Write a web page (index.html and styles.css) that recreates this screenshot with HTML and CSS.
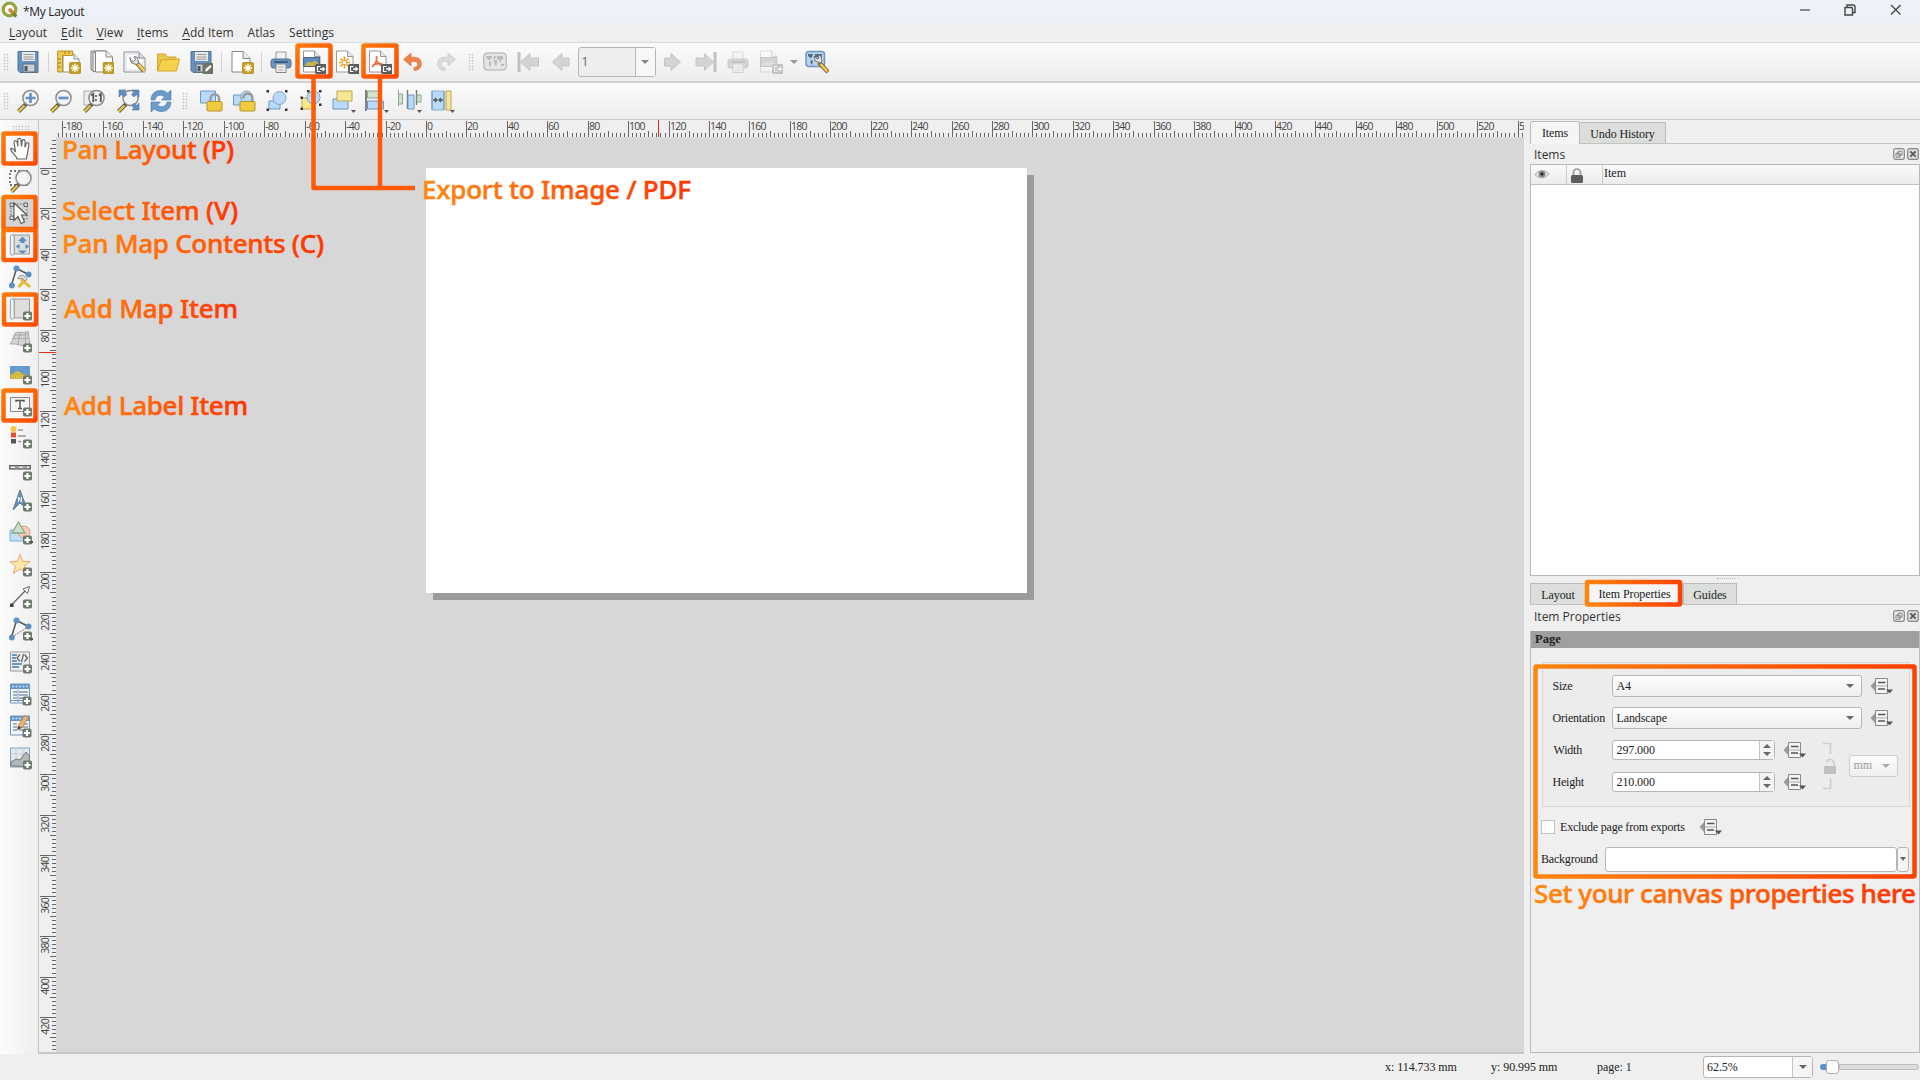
FILE: index.html
```html
<!DOCTYPE html>
<html lang="en">
<head>
<meta charset="utf-8">
<title>*My Layout</title>
<link rel="stylesheet" href="styles.css">
</head>
<body>
<svg class="sprite" aria-hidden="true">
  <defs>
    <symbol id="plus" viewBox="0 0 10 10"><rect x=".5" y=".5" width="9" height="9" rx="1.8" fill="#6b7a6b"/><path d="M5 2v6M2 5h6" stroke="#fff" stroke-width="2.2"/></symbol>
    <symbol id="star-badge" viewBox="0 0 11 11"><rect width="11" height="11" rx="1.5" fill="#c09a28"/><path d="M5.5 1.5v8M1.5 5.5h8M2.8 2.8l5.4 5.4M8.2 2.8L2.8 8.2" stroke="#fffbe0" stroke-width="1.3"/></symbol>
    <symbol id="export-badge" viewBox="0 0 12 10"><rect width="12" height="10" rx="1.8" fill="#5c5c5c"/><path d="M5.500 2.500H2.500v5h3" fill="none" stroke="#fff" stroke-width="1.200"/><path d="M5 4.300h2.500V2.300L10.500 5 7.500 7.700V5.700H5z" fill="#fff"/></symbol>
    <symbol id="lens" viewBox="0 0 24 24"><path d="M10 15l-7.500 7.500" stroke="#57574f" stroke-width="4"/><path d="M8.500 16.500L2.500 22.500" stroke="#f0c640" stroke-width="2.400"/><circle cx="14.500" cy="9" r="7.600" fill="#f4f4f4" fill-opacity=".9" stroke="#8e8e8e" stroke-width="1.500"/></symbol>
    <symbol id="save" viewBox="0 0 24 24"><path d="M2 1.500h20v21H4L2 20.500z" fill="#6491c2" stroke="#57748f"/><path d="M6 2h13v9H6z" fill="#e9e9e9"/><path d="M7.500 4.500h10M7.500 7h10M7.500 9.200h10" stroke="#999"/><path d="M7 14h12v8H7z" fill="#ccd0d2" stroke="#667"/><path d="M8.500 16h3v5h-3z" fill="#3d5a78"/></symbol>
    <symbol id="new-layout" viewBox="0 0 24 24"><path d="M6 4h11l5 5v13H6z" fill="#fff" stroke="#8d8d8d"/><path d="M17 4v5h5" fill="#eee" stroke="#8d8d8d"/><path d="M.700 1h15v4.500H5.500V22H.700z" fill="#f2cb4a" stroke="#b8922b"/><path d="M1 9h3M1 13h3M1 17h3M8 1v3M12 1v3" stroke="#9d7b22"/><use href="#star-badge" x="12" y="12" width="12" height="12"/></symbol>
    <symbol id="duplicate" viewBox="0 0 24 24"><path d="M1 1h15v19H1z" fill="#ddd" stroke="#858585"/><path d="M3 2.500h15v19H3z" fill="#eee" stroke="#858585"/><path d="M5.500 1h11l6 6v15h-17z" fill="#fff" stroke="#858585"/><path d="M16 1v6h6" fill="#eee" stroke="#858585"/><use href="#star-badge" x="12.500" y="12" width="12" height="12"/></symbol>
    <symbol id="manager" viewBox="0 0 24 24"><path d="M1 2h15l6 6v14H1z" fill="#fff" stroke="#8d8d8d"/><path d="M3 4h12v4h5v12H3z" fill="none" stroke="#c9d9ec"/><path d="M16 2v6h6" fill="#ddd" stroke="#8d8d8d"/><path d="M13 12l8 9" stroke="#806c34" stroke-width="4.500"/><path d="M15 14l6.500 7" stroke="#f3ce57" stroke-width="2.600"/><path d="M7 7.500l1.500 5.500 5 1.500 2-2-1-5-3-1 1 3-2 2-3-1z" fill="#e2e2e2" stroke="#777"/></symbol>
    <symbol id="folder" viewBox="0 0 24 24"><path d="M1.500 21V4h8l1.500 3h9v3" fill="#ebc74a" stroke="#cda22d"/><path d="M1.500 21L5 10l18.500-1-3 12z" fill="#f6d24b" stroke="#d3a62c"/></symbol>
    <symbol id="save-as" viewBox="0 0 24 24"><use href="#save" width="24" height="24"/><rect x="13.500" y="13" width="11" height="11" rx="1.500" fill="#6d7465"/><path d="M16 21.500l1-3 4.500-3.500 1 1.500-4 4.500z" fill="#fff"/></symbol>
    <symbol id="add-page" viewBox="0 0 24 24"><path d="M2 1.500h11l7 7v13.500H2z" fill="#fff" stroke="#858585"/><path d="M13 1.500v7h7" fill="#eee" stroke="#858585"/><use href="#star-badge" x="12" y="12" width="12" height="12"/></symbol>
    <symbol id="print" viewBox="0 0 24 24"><path d="M7 2h10v8H7z" fill="#f2f2f2" stroke="#999"/><rect x="2" y="9" width="20" height="9" rx="2.500" fill="#6795c5" stroke="#536f8d"/><path d="M5 12h14" stroke="#405f7d" stroke-width="2"/><path d="M7 14h10v8.500H7z" fill="#eee" stroke="#888"/><path d="M9 17h6M9 20h5" stroke="#aaa"/></symbol>
    <symbol id="doc" viewBox="0 0 24 24"><path d="M1.500 1h11l5.500 5.500V22H1.500z" fill="#fff" stroke="#999"/><path d="M12.500 1v5.500H18" fill="#e5e5e5" stroke="#999"/></symbol>
    <symbol id="export-image" viewBox="0 0 24 24"><use href="#doc" width="24" height="24"/><path d="M1.500 7.500h16v9h-16z" fill="#5c8dc0" stroke="#4c6578"/><path d="M3 15l3-3.500 3 1 4-2 4 3.500v2H3z" fill="#c9b350"/><use href="#export-badge" x="13" y="14" width="12" height="10"/></symbol>
    <symbol id="export-svg" viewBox="0 0 24 24"><use href="#doc" width="24" height="24"/><path d="M9.500 6.500v12M4 12.500h11M5.500 8.500l8 8M13.500 8.500l-8 8" stroke="#f39a21" stroke-width="1.600"/><circle cx="9.500" cy="12.500" r="1.700" fill="#fff"/><use href="#export-badge" x="13" y="14" width="12" height="10"/></symbol>
    <symbol id="export-pdf" viewBox="0 0 24 24"><use href="#doc" width="24" height="24"/><path d="M8.500 6c1 5-1 8-4.500 11M9 11c1 3 3 4.500 7 5M5 15c4-2 7-2 9-1" fill="none" stroke="#ef6a36" stroke-width="1.700"/><use href="#export-badge" x="13" y="14" width="12" height="10"/></symbol>
    <symbol id="undo" viewBox="0 0 24 24"><path d="M2.500 9.500L10 3v4.200h3.500c5 0 6.800 3.300 6.800 6.300 0 4.500-3 7-7.300 7v-3c2.500 0 3.700-1.500 3.700-3.200s-1.200-2.800-3.200-2.800H10V16z" fill="#f08148" stroke="#d86d3a" stroke-width=".6"/></symbol>
    <symbol id="redo" viewBox="0 0 24 24"><path d="M21.500 9.500L14 3v4.200h-3.500c-5 0-6.800 3.300-6.800 6.300 0 4.500 3 7 7.300 7v-3c-2.500 0-3.700-1.500-3.700-3.200s1.200-2.800 3.200-2.800H14V16z" fill="#dadcda" stroke="#c6c8c6" stroke-width=".7"/></symbol>
    <symbol id="atlas" viewBox="0 0 24 24"><rect x=".7" y="3" width="22.600" height="17" rx="4" fill="#e4e6e4" stroke="#bfc1bf" stroke-width="1.600"/><path d="M3 6h6v2l-2 1.500-1 1-2-1.500zM6 11l2.500 1-1 4.500-1.500-1zM11 6h2l-1 3h-1.500zM11 10h3v3l-1 3-2-3zM14 6h6v3l-2 1v3l-2-3-2-1zM18 14h3v2h-3z" fill="#b9bcb9"/></symbol>
    <symbol id="first" viewBox="0 0 24 24"><path d="M3 2v20" stroke="#c1c3c1" stroke-width="3"/><path d="M4.500 12L14 3.500V8h8.500v8H14v4.500z" fill="#d3d5d3" stroke="#c3c5c3"/></symbol>
    <symbol id="prev" viewBox="0 0 24 24"><path d="M3.500 12L13 3.500V8h7v8h-7v4.500z" fill="#d3d5d3" stroke="#c3c5c3"/></symbol>
    <symbol id="next" viewBox="0 0 24 24"><path d="M20.500 12L11 3.500V8H4.500v8H11v4.500z" fill="#d3d5d3" stroke="#c3c5c3"/></symbol>
    <symbol id="last" viewBox="0 0 24 24"><path d="M22 2v20" stroke="#c1c3c1" stroke-width="3"/><path d="M20.500 12L11.500 3.500V8H3v8h8.500v4.500z" fill="#d3d5d3" stroke="#c3c5c3"/></symbol>
    <symbol id="atlas-settings" viewBox="0 0 24 24"><rect x="1" y="1.500" width="18.500" height="15" rx="3" fill="#b5d4f0" stroke="#7097bd" stroke-width="1.500"/><path d="M3 4h5l-1 2.500-1 2-3-2.500zM6 10l2 1-1 4-1.500-2zM10 4h7v3l-2 2-2-2-3 1z" fill="#52697c"/><path d="M14 12.500l9 9.500" stroke="#776235" stroke-width="4.300"/><path d="M15.500 14l6.800 7.300" stroke="#f3ce57" stroke-width="2.500"/><path d="M9 6l1 5 5 2 2-2-1-5-3-1 1 3-2 1z" fill="#e2e2e2" stroke="#777"/></symbol>
    <symbol id="zoom-in" viewBox="0 0 24 24"><use href="#lens" width="24" height="24"/><path d="M14.500 4v10M9.500 9h10" stroke="#6393c4" stroke-width="2.700"/></symbol>
    <symbol id="zoom-out" viewBox="0 0 24 24"><use href="#lens" width="24" height="24"/><path d="M9.500 9h10" stroke="#6393c4" stroke-width="2.700"/></symbol>
    <symbol id="zoom-actual" viewBox="0 0 24 24"><path d="M2 2h12v14H2z" fill="#eee" stroke="#aaa"/><use href="#lens" width="24" height="24"/><path d="M9.300 6.500l2-1.500v8M16.800 6.500l2-1.500v8" fill="none" stroke="#555" stroke-width="1.800"/><path d="M14 6v2M14 10v2" stroke="#555" stroke-width="1.600"/></symbol>
    <symbol id="zoom-full" viewBox="0 0 24 24"><use href="#lens" width="24" height="24"/><path d="M3 1h7L8.500 3 11 5.500 8 8 5.500 5.500 3 8zM23 1h-7l2 2-2.500 2.500L18 8l2.500-2.500L23 8zM23 21h-7l2-2-2.500-2.500L18 14l2.500 2.500L23 14z" fill="#638fbe" stroke="#4f789f" stroke-width=".6"/></symbol>
    <symbol id="refresh" viewBox="0 0 24 24"><path d="M2 11C2 1 13-1 18.500 4L22 1v10h-9.500l3-3C12 5 7 6 6 11z" fill="#6d9bc9" stroke="#527fac" stroke-width=".6"/><path d="M22 13c0 10-11 12-16.500 7L2 23V13h9.500l-3 3c3.500 3 8.500 2 9.500-3z" fill="#6d9bc9" stroke="#527fac" stroke-width=".6"/></symbol>
    <symbol id="lock" viewBox="0 0 24 24"><path d="M1.500 2h15v12h-15z" fill="#b9dafa" stroke="#6e98c0"/><path d="M11.500 14V9.500a4 4 0 0 1 8.500 0V14" fill="none" stroke="#999" stroke-width="2.400"/><rect x="8" y="12.500" width="15" height="9.500" rx="1" fill="#f0cb3d" stroke="#b79528"/></symbol>
    <symbol id="unlock" viewBox="0 0 24 24"><path d="M1.500 6h13v10h-13z" fill="#b9dafa" stroke="#6e98c0"/><circle cx="14.500" cy="8" r="6" fill="#b9dafa" stroke="#81a5c8"/><path d="M11 9.500c1-7 9-6 9.500 0V14" fill="none" stroke="#999" stroke-width="2.400"/><rect x="8" y="12.500" width="15" height="9.500" rx="1" fill="#f0cb3d" stroke="#b79528"/></symbol>
    <symbol id="group" viewBox="0 0 24 24"><path d="M4 12h11v8H4z" fill="#b9dafa" stroke="#6e98c0"/><circle cx="14.500" cy="9" r="6.500" fill="#b9dafa" stroke="#81a5c8"/><path d="M1.500 1h2.500v2.500H1.500zM20 1h2.500v2.500H20zM1.500 19.500h2.500V22H1.500zM20 19.500h2.500V22H20z" fill="#333"/></symbol>
    <symbol id="ungroup" viewBox="0 0 24 24"><path d="M3 9h13v11H3z" fill="#f8e889" stroke="#c1a94a"/><circle cx="14.500" cy="8.500" r="6.500" fill="#b9dafa" stroke="#81a5c8"/><path d="M8 1h2.500v2.500H8zM20 1h2.500v2.500H20zM1.500 7.500H4V10H1.500zM1.500 18.500h2.500V21H1.500zM14 18.500h2.500V21H14zM20 14.500h2.500V17H20z" fill="#333"/></symbol>
    <symbol id="tri" viewBox="0 0 6 4"><path d="M0 0h6L3 3.500z" fill="#555"/></symbol>
    <symbol id="raise" viewBox="0 0 24 24"><path d="M1 10h15v10H1z" fill="#b9dafa" stroke="#6e98c0"/><path d="M5 2h15v10H5z" fill="#f7e795" stroke="#b8a657"/><use href="#tri" x="19" y="21" width="5" height="3.500"/></symbol>
    <symbol id="align" viewBox="0 0 24 24"><path d="M1 1v21" stroke="#666" stroke-width="1.600"/><path d="M2.500 2h11v7h-11z" fill="#cfe3cf" stroke="#8aa88a"/><path d="M2.500 12h16v8h-16z" fill="#b9dafa" stroke="#6e98c0"/><use href="#tri" x="19" y="21" width="5" height="3.500"/></symbol>
    <symbol id="distribute" viewBox="0 0 24 24"><path d="M0 1v16M9.500 1v19M18.500 1v15" stroke="#777" stroke-width="1.400"/><path d="M.500 5h4v10h-4zM19 6h4v7h-4z" fill="#cfe3cf" stroke="#8aa88a"/><path d="M10 6h6v14h-6z" fill="#b9dafa" stroke="#6e98c0"/><use href="#tri" x="19" y="21" width="5" height="3.500"/></symbol>
    <symbol id="resize" viewBox="0 0 24 24"><path d="M1 2h12v19H1z" fill="#b9dafa" stroke="#8bb0d3"/><path d="M1 2v19M13 2v19" stroke="#6e98c0"/><path d="M2 11h3M12 11H9M4 9l2 2-2 2M10 9l-2 2 2 2" fill="none" stroke="#555" stroke-width="1.300"/><path d="M15 2h5v19h-5z" fill="#f7e795" stroke="#b8a657"/><use href="#tri" x="19" y="21" width="5" height="3.500"/></symbol>
    <symbol id="hand" viewBox="0 0 24 24"><path d="M8 22c-.500-4-5.500-6-6.500-10 2-1.500 3.500.5 5 3L5 5c1-2 2.800-1.500 3.200.5l.8 4L8.700 2.500c1-1.800 3-1.300 3.200.5l.6 6.500.7-6c.8-1.500 2.800-1 2.900.8l-.1 6 1.500-4c1-1.200 2.500-.5 2.400 1l-1.400 9c-.3 2-1 3.500-1 5.700z" fill="#fff" stroke="#666" stroke-width="1.200"/></symbol>
    <symbol id="zoom-tool" viewBox="0 0 24 24"><path d="M1 2h18v14H1z" fill="none" stroke="#444" stroke-dasharray="2 2" stroke-width="1.300"/><use href="#lens" width="24" height="24"/></symbol>
    <symbol id="select" viewBox="0 0 24 24"><path d="M2 3h16v15H2z" fill="none" stroke="#666" stroke-dasharray="1.500 1.500"/><path d="M1 2h3.500v3.500H1zM15 2h3.500v3.500H15zM1 15h3.500v3.500H1z" fill="#d8d8d8" stroke="#666"/><path d="M5 2l13 12h-5.500l3 7-3.500 1.500-3-7-4 4z" fill="#fff" stroke="#555" stroke-width="1.100"/></symbol>
    <symbol id="paper" viewBox="0 0 24 24"><path d="M5 2h15.500v19H5z" fill="#dedede" stroke="#999"/><path d="M5 2C2.500 1 1.300 2 1.300 4v16c0 3 3.700 3 4 0z" fill="#f3f3f3" stroke="#999"/></symbol>
    <symbol id="move-content" viewBox="0 0 24 24"><use href="#paper" width="24" height="24"/><path d="M13.500 3.500l4.500 4.500h-2.500v2h-4V8H9zM10.500 11v5L6.500 13.500zM16.500 11v5l4-2.500zM9 17.500h9L13.500 21z" fill="#5f8fc0"/></symbol>
    <symbol id="nodes" viewBox="0 0 24 24"><path d="M7.500 3.500L2.500 20M7.500 3.500l12 6" stroke="#555" stroke-width="1.500" fill="none"/><circle cx="7.500" cy="3.500" r="3" fill="#5e90c5"/><circle cx="19.500" cy="9.500" r="3" fill="#5e90c5"/><circle cx="2.800" cy="20.500" r="3" fill="#5e90c5"/></symbol>
    <symbol id="edit-nodes" viewBox="0 0 24 24"><use href="#nodes" width="24" height="24"/><path d="M12 14l9 8M17 14L9.500 22" stroke="#eab934" stroke-width="3"/><path d="M9 14c0-4 5-5 7-2l2 2-2 2-3-3z" fill="#ddd" stroke="#999"/></symbol>
    <symbol id="add-map" viewBox="0 0 24 24"><use href="#paper" width="24" height="24"/><use href="#plus" x="13.500" y="14" width="10" height="10"/></symbol>
    <symbol id="add-3d" viewBox="0 0 24 24"><path d="M6 4c5-2 9 1 13-2l2 14c-6 3-12-2-20-1 3-3 3-7 5-11z" fill="#d5d5d5" stroke="#aaa"/><path d="M3 10c7-2 10 1 17-1M11 3L9 16M16 3l1 14M5 7c5-2 9 0 14-2" stroke="#aaa" fill="none"/><use href="#plus" x="13.500" y="14" width="10" height="10"/></symbol>
    <symbol id="add-picture" viewBox="0 0 24 24"><path d="M1 5h20v13H1z" fill="#669ace"/><path d="M1 14c3-1 5-4 8-4l5 3 7 2v3H1z" fill="#cbb23c"/><path d="M3 15h14M6 12h6M5 17h9" stroke="#f2df71" stroke-dasharray="1 1"/><use href="#plus" x="13.500" y="14" width="10" height="10"/></symbol>
    <symbol id="add-label" viewBox="0 0 24 24"><path d="M1.500 4.500h19v14h-19z" fill="#f5f5f5" stroke="#888"/><path d="M7 9V7.500h8V9M11 7.500V15M9 15.500h4" stroke="#555" fill="none" stroke-width="1.400"/><use href="#plus" x="13.500" y="14" width="10" height="10"/></symbol>
    <symbol id="add-legend" viewBox="0 0 24 24"><circle cx="4.500" cy="4" r="3" fill="#f5c735"/><rect x="2" y="7.500" width="5" height="5" fill="#ee512f"/><rect x="2" y="14" width="5" height="4.500" fill="#555"/><path d="M9 5h5M9 11h8M9 16.500h3" stroke="#999" stroke-width="1.400"/><use href="#plus" x="13.500" y="14" width="10" height="10"/></symbol>
    <symbol id="add-scale" viewBox="0 0 24 24"><rect x=".700" y="8.700" width="20.600" height="3.200" fill="#eee" stroke="#555" stroke-width="1.300"/><path d="M6 10.300h4M14 10.300h4" stroke="#999" stroke-width="2"/><use href="#plus" x="13.500" y="14" width="10" height="10"/></symbol>
    <symbol id="add-north" viewBox="0 0 24 24"><path d="M11 1l7 19-7-6-7 7z" fill="#6390c0" stroke="#66788a"/><path d="M9.500 13V8l3 5V8" fill="none" stroke="#fff"/><use href="#plus" x="13.500" y="13" width="10" height="10"/></symbol>
    <symbol id="add-shape" viewBox="0 0 24 24"><path d="M1 9h13v11H1z" fill="#bfdffa" stroke="#83aed5"/><circle cx="15" cy="11" r="6" fill="#f8ccb3" stroke="#df9a7b"/><path d="M9.500 1L16 12H3z" fill="#cfe0cf" stroke="#8aa88a" stroke-width="1.300"/><use href="#plus" x="13.500" y="14" width="10" height="10"/><use href="#tri" x="20" y="20" width="5" height="3.500"/></symbol>
    <symbol id="add-marker" viewBox="0 0 24 24"><path d="M11 1.500l2.800 7h7.200l-5.500 4.500 2 7.500-6.500-4.500-6.500 4.500 2-7.500L1 8.500h7.200z" fill="#f9e8a8" stroke="#eda374"/><use href="#plus" x="13.500" y="14" width="10" height="10"/></symbol>
    <symbol id="add-arrow" viewBox="0 0 24 24"><path d="M2.500 20L17 5" stroke="#666" stroke-width="1.200"/><path d="M14 4l6.500-2.500-2 7z" fill="#fff" stroke="#666"/><path d="M1 18.500h3.500V22H1z" fill="#444"/><use href="#plus" x="13.500" y="14" width="10" height="10"/></symbol>
    <symbol id="add-node" viewBox="0 0 24 24"><use href="#nodes" width="24" height="24"/><path d="M3 20L19 10" stroke="#777" stroke-dasharray="2 1"/><use href="#plus" x="13.500" y="14" width="10" height="10"/><use href="#tri" x="20" y="21" width="5" height="3.500"/></symbol>
    <symbol id="add-html" viewBox="0 0 24 24"><path d="M1.500 2h19v19h-19z" fill="#eee" stroke="#999"/><path d="M3 5h5M3 8h4M3 11h5M3 14h10M3 17h7" stroke="#6a96c5" stroke-width="2"/><path d="M11 4.500L8 8l3 3.500M14.500 4l-2 8M15.500 4.500l3 3.500-3 3.500" fill="none" stroke="#666" stroke-width="1.300"/><use href="#plus" x="13.500" y="14" width="10" height="10"/></symbol>
    <symbol id="table" viewBox="0 0 24 24"><path d="M1.500 2h19v19h-19z" fill="#f4f8fc" stroke="#6a96c5"/><path d="M1 2h20v5H1z" fill="#6a96c5"/><path d="M3 4.500h16" stroke="#c5ddf4" stroke-width="1.500" stroke-dasharray="2 1.500"/><path d="M4 10h4M10 10h9M4 13h4M10 13h9M4 16h4M10 16h5" stroke="#8b98a5" stroke-width="1.300"/></symbol>
    <symbol id="add-table" viewBox="0 0 24 24"><use href="#table" width="24" height="24"/><path d="M1.500 18.500h12M9 8v12" stroke="#6a96c5"/><use href="#plus" x="13" y="14" width="10" height="10"/></symbol>
    <symbol id="add-manual" viewBox="0 0 24 24"><use href="#table" width="24" height="24"/><path d="M9 12L15.500 1.500l4 2L13 14z" fill="#efb06b" stroke="#a67e45" stroke-width=".7"/><path d="M8 16l1-4 4 2z" fill="#444"/><use href="#plus" x="13" y="14" width="10" height="10"/></symbol>
    <symbol id="add-elevation" viewBox="0 0 24 24"><path d="M1.500 2h19v19h-19z" fill="#e4ebf0" stroke="#79a2ca"/><path d="M7 2v19M14 2v19M1.500 8h19" stroke="#c6cfd5"/><path d="M2 20v-4l5-3 4 1 6-8 3.500 4v10.500z" fill="#b4b8b8" stroke="#777"/><use href="#plus" x="13.500" y="14" width="10" height="10"/></symbol>
    <symbol id="override" viewBox="0 0 24 18"><path d="M5.500 3.500L.500 9l5 5.500z" fill="#999"/><path d="M5.500 1.500h12v15h-12z" fill="#f4f4f4" stroke="#888"/><path d="M8 5.500h7.500M8 12h7" stroke="#555" stroke-width="1.300"/><path d="M5.500 9h12" stroke="#aaa"/><path d="M16 12.500h7l-3.500 4z" fill="#555"/></symbol>
    <symbol id="float" viewBox="0 0 12 12"><rect x=".7" y=".7" width="10.600" height="10.600" rx="2" fill="#eee" stroke="#888" stroke-width="1.200"/><path d="M5 3.200h4v4H5zM3 5.200h4v4H3z" fill="#eee" stroke="#777" stroke-width=".9"/></symbol>
    <symbol id="close" viewBox="0 0 12 12"><rect x=".7" y=".7" width="10.600" height="10.600" rx="2" fill="#ddd" stroke="#888" stroke-width="1.200"/><path d="M3.300 3.300l5.400 5.400M8.700 3.300L3.300 8.700" stroke="#555" stroke-width="1.700"/></symbol>
  </defs>
</svg>

<div class="window">
  <header class="titlebar">
    <svg class="logo" viewBox="0 0 18 18"><circle cx="8.500" cy="8.500" r="6.300" fill="#fff" stroke="#9aa33b" stroke-width="3.200"/><path d="M8.500 8.500l6.800 7" stroke="#77863a" stroke-width="3.400"/><path d="M8 8l4 4" stroke="#ee7d33" stroke-width="3"/></svg>
    <span class="title">*My Layout</span>
    <svg class="win-buttons" viewBox="0 0 105 14"><path d="M2 7h10" stroke="#444" stroke-width="1.200"/><path d="M47 4.500h6.500a1 1 0 0 1 1 1V12h-7.500zM49 4V2h6a2 2 0 0 1 2 2v5.500h-2" fill="none" stroke="#444" stroke-width="1.400"/><path d="M93 2l9.500 9.500M102.500 2L93 11.500" stroke="#444" stroke-width="1.300"/></svg>
  </header>

  <nav class="menubar">
    <span><u>L</u>ayout</span><span><u>E</u>dit</span><span><u>V</u>iew</span><span><u>I</u>tems</span><span><u>A</u>dd Item</span><span>Atlas</span><span>Settings</span>
  </nav>

  <div class="toolbar toolbar-main">
    <i class="grip"></i>
    <svg class="tool"><use href="#save"/></svg>
    <i class="sep"></i>
    <svg class="tool"><use href="#new-layout"/></svg>
    <svg class="tool"><use href="#duplicate"/></svg>
    <svg class="tool"><use href="#manager"/></svg>
    <svg class="tool"><use href="#folder"/></svg>
    <svg class="tool"><use href="#save-as"/></svg>
    <i class="sep"></i>
    <svg class="tool"><use href="#add-page"/></svg>
    <i class="sep narrow"></i>
    <svg class="tool"><use href="#print"/></svg>
    <svg class="tool"><use href="#export-image"/></svg>
    <svg class="tool"><use href="#export-svg"/></svg>
    <svg class="tool"><use href="#export-pdf"/></svg>
    <svg class="tool"><use href="#undo"/></svg>
    <svg class="tool"><use href="#redo"/></svg>
    <i class="grip wide"></i>
    <svg class="tool"><use href="#atlas"/></svg>
    <svg class="tool"><use href="#first"/></svg>
    <svg class="tool"><use href="#prev"/></svg>
    <div class="page-combo"><span>1</span><b><i class="down"></i></b></div>
    <svg class="tool"><use href="#next"/></svg>
    <svg class="tool"><use href="#last"/></svg>
    <svg class="tool faded"><use href="#print"/></svg>
    <svg class="tool faded"><use href="#export-image"/></svg>
    <i class="down lone"></i>
    <svg class="tool"><use href="#atlas-settings"/></svg>
  </div>

  <div class="toolbar toolbar-nav">
    <i class="grip"></i>
    <svg class="tool"><use href="#zoom-in"/></svg>
    <svg class="tool"><use href="#zoom-out"/></svg>
    <svg class="tool"><use href="#zoom-actual"/></svg>
    <svg class="tool"><use href="#zoom-full"/></svg>
    <svg class="tool"><use href="#refresh"/></svg>
    <i class="grip wide"></i>
    <svg class="tool"><use href="#lock"/></svg>
    <svg class="tool"><use href="#unlock"/></svg>
    <svg class="tool"><use href="#group"/></svg>
    <svg class="tool"><use href="#ungroup"/></svg>
    <svg class="tool"><use href="#raise"/></svg>
    <svg class="tool"><use href="#align"/></svg>
    <svg class="tool"><use href="#distribute"/></svg>
    <svg class="tool"><use href="#resize"/></svg>
  </div>

  <main class="work">
    <aside class="toolbox">
      <i class="grip-h"></i>
      <svg><use href="#hand"/></svg>
      <svg><use href="#zoom-tool"/></svg>
      <svg class="active"><use href="#select"/></svg>
      <svg><use href="#move-content"/></svg>
      <svg><use href="#edit-nodes"/></svg>
      <svg><use href="#add-map"/></svg>
      <svg><use href="#add-3d"/></svg>
      <svg><use href="#add-picture"/></svg>
      <svg><use href="#add-label"/></svg>
      <svg><use href="#add-legend"/></svg>
      <svg><use href="#add-scale"/></svg>
      <svg><use href="#add-north"/></svg>
      <svg><use href="#add-shape"/></svg>
      <svg><use href="#add-marker"/></svg>
      <svg><use href="#add-arrow"/></svg>
      <svg><use href="#add-node"/></svg>
      <svg><use href="#add-html"/></svg>
      <svg><use href="#add-table"/></svg>
      <svg><use href="#add-manual"/></svg>
      <svg><use href="#add-elevation"/></svg>
    </aside>

    <section class="view">
      <svg class="ruler-h" id="ruler-h"></svg>
      <svg class="ruler-v" id="ruler-v"></svg>
      <div class="canvas"><div class="sheet"></div></div>
    </section>

    <aside class="docks">
      <div class="tabs"><span class="tab on items">Items</span><span class="tab history">Undo History</span></div>
      <div class="dock-title"><span>Items</span><svg><use href="#float"/></svg><svg><use href="#close"/></svg></div>
      <div class="tree">
        <div class="tree-head">
          <span><svg class="eye" viewBox="0 0 16 12"><path d="M1 6.500C4 2 11 1 15 6c-4 5-10 5-14 .5z" fill="#ddd" stroke="#aaa"/><circle cx="8" cy="6" r="3.300" fill="#888"/><circle cx="8" cy="6" r="1.500" fill="#222"/></svg></span>
          <span><svg class="padlock" viewBox="0 0 12 15"><path d="M2.500 8V4.500a3.500 3.500 0 0 1 7 0V8" fill="none" stroke="#999" stroke-width="1.700"/><rect y="7" width="12" height="8" rx="1.500" fill="#5e5e5e"/></svg></span>
          <span class="name">Item</span>
        </div>
      </div>
      <div class="splitter"></div>
      <div class="tabs lower"><span class="tab layout">Layout</span><span class="tab on props">Item Properties</span><span class="tab guides">Guides</span></div>
      <div class="dock-title second"><span>Item Properties</span><svg><use href="#float"/></svg><svg><use href="#close"/></svg></div>
      <div class="properties">
        <h2>Page</h2>
        <div class="group">
          <div class="row"><label>Size</label><div class="combo">A4<i class="down"></i></div><svg class="ovr"><use href="#override"/></svg></div>
          <div class="row"><label>Orientation</label><div class="combo">Landscape<i class="down"></i></div><svg class="ovr"><use href="#override"/></svg></div>
          <div class="dims">
            <div class="dim-rows">
              <div class="row"><label class="w">Width</label><div class="spin">297.000<b><i class="up"></i><i class="down"></i></b></div><svg class="ovr"><use href="#override"/></svg></div>
              <div class="row"><label>Height</label><div class="spin">210.000<b><i class="up"></i><i class="down"></i></b></div><svg class="ovr"><use href="#override"/></svg></div>
            </div>
            <svg class="ratio" viewBox="0 0 14 48"><path d="M0 1.500h7.500V12M0 46.500h7.500V36" fill="none" stroke="#cdcdcd" stroke-width="1.600"/><rect x="1" y="24" width="12" height="8" rx="1" fill="#c0c0c0"/><path d="M4 20c1-4 7-3 7 1v3" fill="none" stroke="#cdcdcd" stroke-width="1.700"/></svg>
            <div class="combo unit">mm<i class="down"></i></div>
          </div>
        </div>
        <div class="row exclude"><i class="check"></i><span>Exclude page from exports</span><svg class="ovr"><use href="#override"/></svg></div>
        <div class="row background"><label>Background</label><div class="swatch"></div><div class="swatch-menu"><i class="down"></i></div></div>
      </div>
    </aside>
  </main>

  <footer class="status">
    <span class="sx">x: 114.733 mm</span><span class="sy">y: 90.995 mm</span><span class="sp">page: 1</span>
    <div class="zoom-combo"><span>62.5%</span><b><i class="down"></i></b></div>
    <div class="slider"><i class="fill"></i><i class="knob"></i><i class="track"></i></div>
  </footer>
</div>

<svg class="notes" viewBox="0 0 1920 1080">
  <defs>
    <linearGradient id="warm" x1="0" y1="0" x2="1" y2="0"><stop offset="0" stop-color="#ff8a10"/><stop offset="1" stop-color="#ff3300"/></linearGradient>
    <linearGradient id="frame" x1="0" y1="0" x2="1" y2="1"><stop offset="0" stop-color="#ff7a08"/><stop offset="1" stop-color="#ff4a00"/></linearGradient>
    <linearGradient id="frame-wide" x1="0" y1="0" x2="1" y2="0"><stop offset="0" stop-color="#ff850c"/><stop offset="1" stop-color="#ff4000"/></linearGradient>
  </defs>
  <path d="M313.500 78v110H415M380 78v110" fill="none" stroke="#ff5a08" stroke-width="4.500" stroke-linejoin="round"/>
  <g fill="none" stroke="url(#frame)" stroke-width="4.500">
    <rect x="297.500" y="45.500" width="33" height="31" rx="1"/>
    <rect x="363.500" y="45.500" width="33" height="31" rx="1"/>
    <rect x="3.500" y="133.500" width="32" height="30" rx="1"/>
    <rect x="3.500" y="197" width="32" height="32" rx="1"/>
    <rect x="3.500" y="230" width="32" height="30" rx="1"/>
    <rect x="4" y="294.500" width="32" height="30" rx="1"/>
    <rect x="3.500" y="390.500" width="32" height="30" rx="1"/>
  </g>
  <g fill="none" stroke="url(#frame-wide)" stroke-width="4.500">
    <rect x="1587" y="582" width="93" height="22.500" rx="1"/>
    <rect x="1535.500" y="666.500" width="379" height="210" rx="1"/>
  </g>
  <g class="note-text" fill="url(#warm)">
    <text x="62" y="158.500" textLength="172">Pan Layout (P)</text>
    <text x="62" y="220" textLength="176">Select Item (V)</text>
    <text x="62" y="253" textLength="262">Pan Map Contents (C)</text>
    <text x="64" y="317.500" textLength="174">Add Map Item</text>
    <text x="64" y="415" textLength="184">Add Label Item</text>
    <text x="422" y="198.500" textLength="269">Export to Image / PDF</text>
    <text x="1534" y="902.500" textLength="382">Set your canvas properties here</text>
  </g>
</svg>
<script src="rulers.js"></script>
</body>
</html>
```
FILE: styles.css
```css
* { box-sizing: border-box; }
body { margin: 0; overflow: hidden; background: #efefef; color: #222; font: 12px "Liberation Serif", serif; }
i { font-style: normal; display: block; }
svg { display: block; flex: none; overflow: visible; }
.sprite { position: absolute; width: 0; height: 0; }
.window { width: 1920px; height: 1080px; display: flex; flex-direction: column; }

.titlebar { height: 23px; flex: none; background: #edf2f8; display: flex; align-items: center; padding: 0 10px 3px 1px; font: 12px "Open Sans", sans-serif; }
.logo { width: 18px; height: 18px; }
.title { margin-left: 4px; flex: 1; letter-spacing: -.3px; padding-top: 2px; }
.win-buttons { width: 105px; height: 14px; margin-right: 7px; }
.menubar { height: 19px; flex: none; display: flex; align-items: center; gap: 13.9px; padding: 0 9px; font: 12px "Open Sans", sans-serif; letter-spacing: .06px; color: #333; }
.menubar u { text-underline-offset: 2px; }

.toolbar { flex: none; display: flex; align-items: center; background: linear-gradient(#fbfbfb, #ededed); border-top: 1px solid #dadada; padding-bottom: 1px; }
.toolbar-main { height: 39px; }
.toolbar-nav { height: 38px; border-top: 2px solid #d0d0d0; }
.tool { width: 24px; height: 24px; margin: 0 4.5px; }
.toolbar-nav .tool { margin: 0 4.6px; }
.faded { filter: grayscale(1); opacity: .3; }
.grip { width: 6px; height: 18px; margin: 0 3px 0 2.5px; background: radial-gradient(circle, #c6c6c6 .8px, transparent 1.1px) 0 0 / 3px 3px; }
.grip.wide { margin: 0 5px; }
.toolbar-nav .wide { margin-right: 6px; }
.sep { width: 1px; height: 20px; margin: 0 3.5px; background: #d2d2d2; }
.sep.narrow { margin: 0 2.5px; }
.down { width: 0; height: 0; border: 4px solid transparent; border-top: 4.5px solid #666; border-bottom: 0; }
.up { width: 0; height: 0; border: 4px solid transparent; border-bottom: 4.5px solid #666; border-top: 0; }
.down.lone { margin: 0 3px 0 2px; border-top-color: #999; }
.page-combo { width: 78px; height: 30px; border: 1px solid #b5b5b5; border-radius: 3px; display: flex; background: #eee; font: 12px "Open Sans", sans-serif; color: #666; }
.page-combo span { flex: 1; padding: 5px 3px; }
.page-combo b { width: 20px; border-left: 1px solid #bbb; background: #f7f7f7; display: grid; place-items: center; }
.page-combo .down { border-top-color: #888; }

.work { flex: 1; min-height: 0; display: flex; border-top: 1px solid #c8c8c8; }
.toolbox { width: 39px; flex: none; background: linear-gradient(90deg, #fcfcfc, #eee); border-right: 1px solid #c6c6c6; display: flex; flex-direction: column; align-items: center; padding: 5px 0 0 3px; }
.toolbox svg { width: 24px; height: 24px; margin: 4.04px 0; }
.toolbox .active { background: #d3d3d3; box-shadow: 0 0 0 4px #d3d3d3; }
.grip-h { width: 18px; height: 6px; margin-bottom: 1.5px; background: radial-gradient(circle, #c6c6c6 .8px, transparent 1.1px) 0 0 / 3px 3px; }
.view { width: 1485px; flex: none; display: grid; grid-template: 17px 1fr / 17px 1fr; border-bottom: 2px solid #c6c6c6; }
.ruler-h { grid-column: 1 / 3; width: 1485px; height: 17px; overflow: hidden; }
.ruler-v { width: 17px; height: 915px; }
.ruler-h line, .ruler-v line { stroke: #666; }
.ruler-h text, .ruler-v text { font: 10.5px "Open Sans", sans-serif; fill: #444; letter-spacing: -.75px; }
.ruler-h .cursor, .ruler-v .cursor { stroke: #f22c10; }
.canvas { background: #d7d7d7; padding: 31px 0 0 370px; }
.sheet { width: 601px; height: 425px; background: #fff; box-shadow: 7px 7px 0 #9b9b9b; }

.docks { flex: 1; min-width: 0; padding-left: 6px; display: flex; flex-direction: column; }
.tabs { height: 24px; flex: none; display: flex; align-items: flex-end; border-bottom: 1px solid #c2c2c2; }
.tab { height: 21px; border: 1px solid #bbb; border-bottom: 0; background: #dcdedc; text-align: center; line-height: 22px; white-space: nowrap; letter-spacing: -.1px; }
.tab.on { height: 23px; margin-bottom: -1px; background: #f5f5f5; border-radius: 3px 3px 0 0; line-height: 22px; }
.items { width: 50px; }
.history { width: 86px; border-left: 0; }
.dock-title { height: 20px; flex: none; display: flex; align-items: center; gap: 2px; padding: 0 1px 0 4px; font: 12px "Open Sans", sans-serif; color: #333; }
.dock-title span { flex: 1; }
.dock-title svg { width: 12px; height: 12px; }
.tree { height: 412px; flex: none; background: #fff; border: 1px solid #b9b9b9; }
.tree-head { height: 20px; display: flex; border-bottom: 1px solid #c0c0c0; background: linear-gradient(#fafafa, #ececec); }
.tree-head span { width: 36px; padding: 3px; border-right: 1px solid #ccc; }
.tree-head .name { flex: 1; padding: 1px; border: 0; }
.eye { width: 16px; height: 12px; }
.padlock { width: 12px; height: 15px; margin-left: 1px; }
.splitter { height: 5px; flex: none; width: 18px; margin-left: 187px; border-bottom: 1px dotted #bbb; margin-top: -2px; }
.lower { height: 26px; }
.layout { width: 56px; }
.props { width: 97px; }
.guides { width: 54px; }
.second { height: 22px; margin-bottom: 4px; }
.properties { height: 422px; border: 1px solid #bcbcbc; border-top: 0; }
h2 { margin: 0; height: 17px; background: #9f9f9f; font: bold 12.5px/16px "Liberation Serif", serif; padding-left: 4px; }
.group { margin: 14px 9px 0 11px; height: 145px; border: 1px solid #d7d7d7; background: #ececec; padding: 11px 0 0 9.500px; }
.row { display: flex; align-items: center; height: 32px; white-space: nowrap; letter-spacing: -.1px; }
.group > .row { height: 32px; margin-top: -4px; margin-bottom: 4px; }
.row label { width: 59px; flex: none; letter-spacing: -.2px; }
.row label.w { padding-left: 1px; }
.combo { width: 250px; height: 22px; flex: none; border: 1px solid #b6b6b6; border-radius: 3px; background: linear-gradient(#fdfdfd, #efefef); display: flex; align-items: center; justify-content: space-between; padding: 0 7px 0 4px; }
.ovr { width: 24px; height: 18px; margin-left: 8.500px; }
.dims { display: flex; margin-top: -4px; }
.dim-rows { width: 255px; }
.spin { width: 163px; height: 20px; flex: none; border: 1px solid #b6b6b6; border-radius: 3px; background: #fff; display: flex; align-items: center; justify-content: space-between; padding-left: 4px; font-size: 12px; }
.spin b { width: 15px; height: 18px; border-left: 1px solid #c4c4c4; background: #f4f4f4; display: flex; flex-direction: column; align-items: center; justify-content: space-evenly; }
.ratio { width: 14px; height: 48px; margin: 8px 12px 0 15px; }
.combo.unit { width: 49px; margin-top: 20.500px; color: #999; border-color: #ccc; padding-left: 4px; }
.unit .down { border-top-color: #aaa; }
.exclude { margin: 4px 0 0 10px; }
.check { width: 14px; height: 14px; background: #fff; border: 1px solid #c2c2c2; margin-right: 5px; }
.exclude span { letter-spacing: -.2px; }
.exclude .ovr { margin-left: 14px; }
.background { margin-left: 10px; }
.row.background label { width: 64px; }
.swatch { width: 292px; height: 25px; background: #fff; border: 1px solid #b6b6b6; border-radius: 3px; }
.swatch-menu { width: 12px; height: 25px; border: 1px solid #b6b6b6; border-radius: 3px; display: grid; place-items: center; background: #f5f5f5; }
.swatch-menu .down { border-width: 4px 3.5px 0; }

.status { height: 26px; flex: none; display: flex; align-items: center; padding-left: 1385px; white-space: nowrap; letter-spacing: -.05px; }
.sx { width: 106px; }
.sy { width: 106px; }
.sp { width: 106px; }
.zoom-combo { width: 110px; height: 22px; border: 1px solid #b5b5b5; border-radius: 3px; display: flex; align-items: center; background: #fff; padding-left: 3px; }
.zoom-combo span { flex: 1; }
.zoom-combo b { width: 20px; height: 20px; border-left: 1px solid #c4c4c4; background: #f5f5f5; display: grid; place-items: center; }
.slider { display: flex; align-items: center; margin-left: 7px; }
.fill { width: 6px; height: 6px; border-radius: 3px 0 0 3px; background: #5c92cb; }
.knob { width: 13px; height: 14px; border: 1px solid #b0b0b0; border-radius: 3px; background: #fdfdfd; }
.track { width: 80px; height: 6px; border: 1px solid #bbb; border-radius: 0 3px 3px 0; background: #ddd; }

.notes { position: absolute; left: 0; top: 0; width: 1920px; height: 1080px; pointer-events: none; }
.note-text { font: 500 26px "Noto Sans", "Open Sans", sans-serif; stroke: url(#warm); stroke-width: .5px; }
```
FILE: rulers.js
```js
// Rulers in millimetres: a long labelled mark every 20, a medium one every 10, a short one every 2.
const SCALE = 2.0214;
const NS = 'http://www.w3.org/2000/svg';

function add(parent, tag, attrs, text) {
  const el = document.createElementNS(NS, tag);
  for (const key in attrs) el.setAttribute(key, attrs[key]);
  if (text !== undefined) el.textContent = text;
  parent.appendChild(el);
}

function drawRuler(id, origin, from, to, horizontal, cursor) {
  const svg = document.getElementById(id);
  for (let v = from; v <= to; v += 2) {
    const p = Math.round(origin + v * SCALE) + 0.5;
    const len = v % 20 === 0 ? 16 : v % 10 === 0 ? 6 : 4;
    add(svg, 'line', horizontal
      ? { x1: p, x2: p, y1: 17 - len, y2: 17 }
      : { x1: 17 - len, x2: 17, y1: p, y2: p });
    if (v % 20 === 0) {
      add(svg, 'text', horizontal
        ? { x: p + 0.5, y: 9.5 }
        : { transform: `translate(9.5 ${p + 1.5}) rotate(-90)`, 'text-anchor': 'end' }, v);
    }
  }
  add(svg, 'line', horizontal
    ? { class: 'cursor', x1: cursor, x2: cursor, y1: 0, y2: 17 }
    : { class: 'cursor', x1: 0, x2: 17, y1: cursor, y2: cursor });
}

drawRuler('ruler-h', 387, -182, 544, true, 619.5);
drawRuler('ruler-v', 31, -14, 436, false, 215.5);
```
